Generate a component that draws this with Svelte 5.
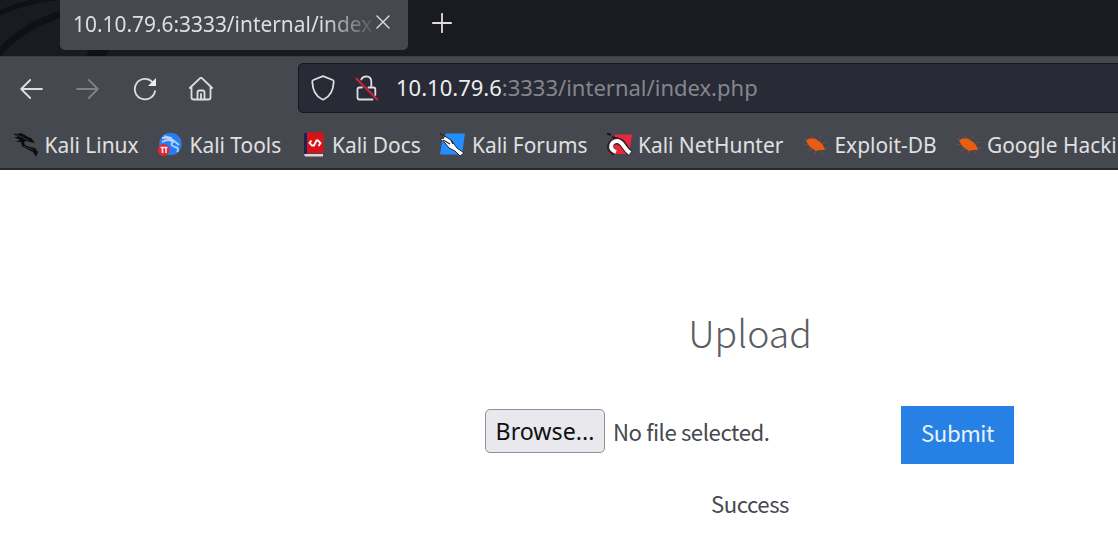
<script>
  const bookmarks = [
    { name: 'Kali Linux', icon: 'dragon', left: 13, text: 44.5 },
    { name: 'Kali Tools', icon: 'tools', left: 157, text: 189.5 },
    { name: 'Kali Docs', icon: 'docs', left: 303, text: 332 },
    { name: 'Kali Forums', icon: 'forums', left: 439, text: 472 },
    { name: 'Kali NetHunter', icon: 'hunter', left: 606, text: 638 },
    { name: 'Exploit-DB', icon: 'bug', left: 803, text: 834.5 },
    { name: 'Google Hacking DB', icon: 'bug', left: 956, text: 987 }
  ].map((b, i, all) => ({
    ...b,
    slot: (all[i + 1]?.left ?? 1190) - b.left
  }));
</script>

<div class="browser">
  <header class="tabs">
    <svg class="theme" width="130" height="56" viewBox="0 0 130 56" fill="none" stroke="#101115">
      <path d="M-4 15Q22 1 64-3" stroke-width="5" />
      <path d="M-5 57Q23 24 68 12" stroke-width="7" />
      <path d="M86 57H106L110 48H90Z" fill="#101115" stroke="none" />
    </svg>
    <div class="tab">
      <span class="title">10.10.79.6:3333/internal/index.php</span>
      <svg class="close" width="14" height="14" viewBox="0 0 14 14"><path d="M1 1L13 13M13 1L1 13" /></svg>
    </div>
    <svg class="plus" width="20" height="20" viewBox="0 0 20 20"><path d="M10 .8V19.2M.8 10H19.2" /></svg>
  </header>

  <nav class="toolbar">
    <svg class="nav" width="24" height="24" viewBox="0 0 24 24"><path d="M11.2 3L2.2 12L11.2 21M2.2 12H23" /></svg>
    <svg class="nav dim" width="24" height="24" viewBox="0 0 24 24"><path d="M12.8 3L21.8 12L12.8 21M21.8 12H1" /></svg>
    <svg class="nav" width="24" height="24" viewBox="0 0 24 24">
      <path d="M19.4 5.1A10.2 10.2 0 1 0 22 14.2" />
      <path class="solid" d="M23 1V9H15Z" />
    </svg>
    <svg class="nav home" width="24" height="24" viewBox="0 0 24 24">
      <path d="M.8 11L10.9 1.3Q12 .4 13.1 1.3L23.2 11M2.5 10V20.2Q2.5 22.5 4.8 22.5H19.2Q21.5 22.5 21.5 20.2V10M8.5 22V15.7Q8.5 13.5 10.5 13.5H13.5Q15.5 13.5 15.5 15.7V22M12 22V17" />
    </svg>
    <div class="address">
      <svg class="shield" width="24" height="26" viewBox="0 0 24 26">
        <path d="M12 1.2L21.7 5Q22.8 5.4 22.7 7C22.3 16 18.5 21.5 13 24.3Q12 24.9 11 24.3C5.5 21.5 1.7 16 1.3 7Q1.2 5.4 2.3 5Z" />
      </svg>
      <svg class="lock" width="24" height="26" viewBox="0 0 24 26">
        <path d="M6.3 4.5Q7.5 1.4 11.3 1.4Q16.2 1.6 16.3 6.5V12.5M13.5 12.5H18.5Q20.3 12.5 20.3 14.3V20M17.5 24.5H4.5Q2.5 24.5 2.5 22.5V14.5Q2.5 12.5 4.5 12.5H7" />
        <path class="slash" d="M1.5 3.8L22.2 24.5" />
      </svg>
      <span class="url"><b>10.10.79.6</b>:3333/internal/index.php</span>
    </div>
  </nav>

  <div class="bookmarks">
    {#each bookmarks as b}
      <div class="bookmark" style:width="{b.slot}px">
        <svg width={b.text - b.left} height="26" viewBox="0 0 {b.text - b.left} 26">
          {#if b.icon === 'dragon'}
            <path d="M0 1.5L4 2L8 1L12 3L15 5L18 6L22 11L17 10L13 9L11 10L12 13L17 15L22 16L25 20L23 25L20 20L14 17L9 14L8 10L3 10L7 8L1 5L5 5Z" fill="#0c0d10" />
            <path d="M3 3L9 5L16 9M11 14L20 18" fill="none" stroke="#303238" />
          {:else if b.icon === 'tools'}
            <circle cx="13.5" cy="12" r="11.2" fill="#267df3" />
            <path d="M5 6Q12 5 16 8L22 13M5 10Q12 6 16 10Q12 13 18 15Q23 16 20 20M7 4L15 6" fill="none" stroke="#b5d2f5" stroke-width="1.8" />
            <circle cx="6.7" cy="18" r="5.9" fill="#df2738" />
            <path d="M3.5 15.5H10.5M5.5 15.5V21M9 15.5V21" stroke="#ffe0e3" stroke-width="1.6" />
          {:else if b.icon === 'docs'}
            <path d="M1 1H4V22H1Z" fill="#192354" /><path d="M4 .5H20.5V21H4Z" fill="#dc1117" />
            <path d="M1 22H20V24.5H2Z" fill="#ddd4d6" />
            <path d="M8.5 8.5L6.5 11L9 13.5H11L13.5 8.5H15L17.5 11L15.5 14" stroke="#fff" stroke-width="1.8" fill="none" />
          {:else if b.icon === 'forums'}
            <path d="M7 1.5H26L23 22.5H1L3 10Z" fill="#248eff" />
            <path d="M1 1.5L8 5.5L12 8L18 16L25 21L21 24L16 19L10 16L6 11L1 7L5 6Z" fill="#fff" stroke="#24272c" />
            <path d="M1 1L6 5M4 8L11 12M12 8L14 12" stroke="#24272c" stroke-width="1.3" />
          {:else if b.icon === 'hunter'}
            <path d="M9 2.5H26L23 22H3L1 17Z" fill="#e9283d" />
            <path d="M1 1.5L5 3M6 5L13 7" stroke="#17171b" stroke-width="2" />
            <path d="M9 20.5C1 17 4 9 11 9C18 9 17 16 24 21" stroke="#292228" stroke-width="6.5" fill="none" />
            <path d="M10 20C2 17 5 9 11 9C17 9 17 16 24 21" stroke="#fff" stroke-width="4" fill="none" />
          {:else}
            <g fill="none" stroke="#8b5138" stroke-width=".8">
              <path d="M7 8L1 7M6 12L1 13M9 17L5 19M13 19L12 22M18 19L20 22M15 7L18 4M10 6L7 3M19 11L24 10M21 16L25 16" />
            </g>
            <path d="M3 9L6 6.5L12 6.5L17 10L20 13L22 18L17 18L13 19L7 15Z" fill="#ea5c12" />
          {/if}
        </svg>
        <span>{b.name}</span>
      </div>
    {/each}
  </div>

  <main>
    <h1>Upload</h1>
    <form onsubmit={(e) => e.preventDefault()}>
      <button class="browse" type="button">Browse...</button>
      <span class="file">No file selected.</span>
      <button class="submit">Submit</button>
    </form>
    <p>Success</p>
  </main>
</div>

<style>
  :global(body) { margin: 0; overflow: hidden; }
  .browser { width: 1118px; height: 560px; overflow: hidden; background: #fff; font-family: "Noto Sans", sans-serif; }
  svg { flex: none; display: block; }
  .tabs { position: relative; display: flex; height: 56px; background: #1a1b20; }
  .theme { position: absolute; left: 0; top: 0; }
  .tab { position: relative; box-sizing: border-box; width: 348px; height: 50px; margin-left: 60px; padding-left: 13px; border-radius: 0 0 5px 5px; background: #46484f; display: flex; }
  .title { width: 299px; height: 50px; overflow: hidden; white-space: nowrap; font-size: 20.9px; line-height: 48px; color: #dfdfe1; mask-image: linear-gradient(90deg, #000 250px, transparent 305px); }
  .close { margin: 15px 0 0 4px; }
  .plus { margin: 13px 0 0 24px; }
  .close path, .plus path, .nav path, .shield path, .lock path { fill: none; stroke: #dededf; stroke-width: 1.8; stroke-linejoin: round; stroke-linecap: round; }
  .close path { stroke-width: 1.4; }
  .toolbar { box-sizing: border-box; height: 64px; display: flex; background: #46484f; border-top: 1px solid #3a3c42; padding: 6px 0 0 19px; }
  .nav { margin: 14px 33px 0 0; }
  .nav.home { margin: 14px 85px 0 -1px; }
  .nav .solid { fill: #ececee; stroke: none; }
  .dim { opacity: .38; }
  .address { flex: none; box-sizing: border-box; width: 850px; height: 50px; display: flex; border: 1.5px solid #17181d; border-radius: 5px; background: #282a36; }
  .shield { margin: 11px 0 0 12px; }
  .lock { margin: 11px 0 0 20px; }
  .lock .slash { stroke: #d51e46; stroke-width: 2; }
  .url { margin-left: 17px; font-size: 22px; line-height: 47px; color: #85868c; white-space: nowrap; }
  .url b { font-weight: 400; color: #ededee; }
  .bookmarks { box-sizing: border-box; height: 50px; padding: 12px 0 0 13px; display: flex; background: #46484f; border-bottom: 2px solid #27292d; }
  .bookmark { flex: none; display: flex; }
  .bookmark span { font-size: 20.9px; line-height: 26px; color: #e0e0e2; white-space: nowrap; }
  main { padding-left: 382px; width: 736px; font-family: "Noto Sans CJK SC", "Open Sans", sans-serif; color: #454950; text-align: center; }
  h1 { margin: 0; padding-top: 134px; font-size: 37.4px; font-weight: 300; line-height: 56px; color: #5c5d60; }
  form { display: flex; height: 58px; margin: 46px 0 0 103px; text-align: left; }
  button { font: inherit; padding: 0; flex: none; }
  .browse { box-sizing: border-box; width: 120px; height: 44px; margin-top: 3px; border: 1.5px solid #8f8f9d; border-radius: 5px; background: #e9e9ed; color: #101014; font: 23.2px/41px "Noto Sans", sans-serif; padding-top: 1px; }
  .file { width: 288px; margin-left: 8px; font-size: 22.2px; letter-spacing: -.43px; line-height: 50px; white-space: nowrap; }
  .submit { width: 113px; height: 58px; border: 0; background: #2780e3; color: #e8f2fc; font-size: 22.2px; letter-spacing: -.4px; line-height: 51px; padding-bottom: 6px; }
  p { margin: 20px 0 0; font-size: 22.2px; letter-spacing: -.5px; line-height: 38px; }
</style>
